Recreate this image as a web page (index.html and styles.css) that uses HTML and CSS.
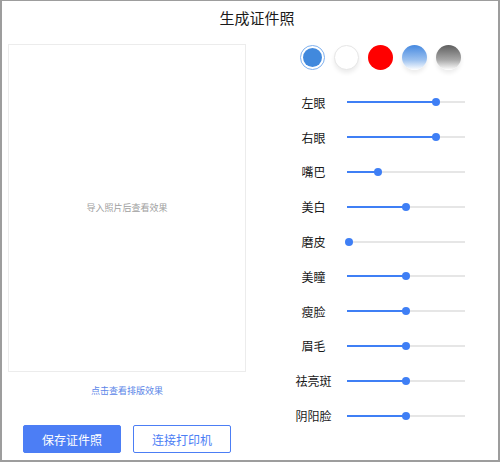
FILE: index.html
```html
<!DOCTYPE html>
<html lang="zh-CN">
<head>
<meta charset="utf-8">
<title>生成证件照</title>
<link rel="stylesheet" href="styles.css">
</head>
<body>
<div class="app">
  <header class="header">生成证件照</header>
  <main class="main">
    <section class="left">
      <div class="photo"><span class="photo-hint">导入照片后查看效果</span></div>
      <a class="layout-link">点击查看排版效果</a>
      <div class="buttons">
        <button class="btn btn-primary">保存证件照</button>
        <button class="btn btn-outline">连接打印机</button>
      </div>
    </section>
    <section class="right">
      <div class="colors">
        <span class="swatch swatch-blue selected"></span>
        <span class="swatch swatch-white"></span>
        <span class="swatch swatch-red"></span>
        <span class="swatch swatch-grad-blue"></span>
        <span class="swatch swatch-grad-gray"></span>
      </div>
      <div class="sliders">
        <div class="row"><span class="label">左眼</span><div class="track"><div class="fill" style="width:75%"></div><span class="thumb" style="left:75%"></span></div></div>
        <div class="row"><span class="label">右眼</span><div class="track"><div class="fill" style="width:75%"></div><span class="thumb" style="left:75%"></span></div></div>
        <div class="row"><span class="label">嘴巴</span><div class="track"><div class="fill" style="width:26%"></div><span class="thumb" style="left:26%"></span></div></div>
        <div class="row"><span class="label">美白</span><div class="track"><div class="fill" style="width:50%"></div><span class="thumb" style="left:50%"></span></div></div>
        <div class="row"><span class="label">磨皮</span><div class="track"><div class="fill" style="width:0%"></div><span class="thumb" style="left:2%"></span></div></div>
        <div class="row"><span class="label">美瞳</span><div class="track"><div class="fill" style="width:50%"></div><span class="thumb" style="left:50%"></span></div></div>
        <div class="row"><span class="label">瘦脸</span><div class="track"><div class="fill" style="width:50%"></div><span class="thumb" style="left:50%"></span></div></div>
        <div class="row"><span class="label">眉毛</span><div class="track"><div class="fill" style="width:50%"></div><span class="thumb" style="left:50%"></span></div></div>
        <div class="row"><span class="label">祛亮斑</span><div class="track"><div class="fill" style="width:50%"></div><span class="thumb" style="left:50%"></span></div></div>
        <div class="row"><span class="label">阴阳脸</span><div class="track"><div class="fill" style="width:50%"></div><span class="thumb" style="left:50%"></span></div></div>
      </div>
    </section>
  </main>
</div>
</body>
</html>
```
FILE: styles.css
```css
* { box-sizing: border-box; }
html, body { margin: 0; padding: 0; background: #fff; }
body {
  font-family: "Noto Sans CJK SC", "Noto Sans", "Liberation Sans", sans-serif;
  color: #222;
}
.app {
  width: 500px;
  height: 462px;
  border: 2px solid #9d9d9d;
  border-top-width: 1px;
  display: flex;
  flex-direction: column;
}
.header {
  height: 33px;
  line-height: 33px;
  text-align: center;
  font-size: 15px;
  padding-left: 14px;
  color: #1a1a1a;
}
.main {
  display: flex;
  padding-top: 10px;
}
.left {
  margin-left: 6px;
  width: 238px;
  display: flex;
  flex-direction: column;
  align-items: stretch;
}
.photo {
  height: 328px;
  border: 1px solid #ececec;
  display: flex;
  align-items: center;
  justify-content: center;
}
.photo-hint {
  font-size: 9px;
  color: #a0a0a0;
  margin-top: -2px;
}
.layout-link {
  display: block;
  text-align: center;
  font-size: 9px;
  line-height: 12px;
  color: #5b86e8;
  margin-top: 13px;
}
.buttons {
  display: flex;
  gap: 12px;
  padding-left: 15px;
  margin-top: 28px;
}
.btn {
  width: 98px;
  height: 28px;
  border-radius: 2px;
  font-family: inherit;
  font-size: 12px;
  padding: 0;
  cursor: pointer;
}
.btn-primary {
  background: #4c7ef5;
  border: 1px solid #4c7ef5;
  color: #fff;
}
.btn-outline {
  background: #fff;
  border: 1px solid #4c7ef5;
  color: #4c7ef5;
}
.right {
  margin-left: 36px;
  width: 190px;
  display: flex;
  flex-direction: column;
}
.colors {
  display: flex;
  gap: 9px;
  padding-left: 18px;
  margin-top: 1px;
}
.swatch {
  width: 25px;
  height: 25px;
  border-radius: 50%;
  display: block;
  box-shadow: 0 3px 4px rgba(0, 0, 0, 0.08);
}
.swatch-blue {
  background: #4189dd;
  background-clip: content-box;
  padding: 2px;
  border: 1px solid #7fb1ef;
  box-shadow: none;
}
.swatch-white {
  background: #fff;
  border: 1px solid #e6e6e6;
}
.swatch-red {
  background: #ff0000;
  box-shadow: none;
}
.swatch-grad-blue {
  background: linear-gradient(to bottom, #4689e0 0%, #9cc1ef 60%, #ffffff 100%);
}
.swatch-grad-gray {
  background: linear-gradient(to bottom, #5e5e5e 0%, #a8a8a8 60%, #ffffff 100%);
}
.sliders {
  margin-top: 15px;
  display: flex;
  flex-direction: column;
}
.row {
  height: 34.8px;
  display: flex;
  align-items: center;
}
.label {
  width: 45px;
  margin-left: 9px;
  text-align: center;
  font-size: 12px;
  color: #1a1a1a;
}
.track {
  position: relative;
  margin-left: 11px;
  width: 118px;
  height: 2px;
  background: #e6e6e6;
}
.fill {
  height: 2px;
  background: #3f7ff5;
}
.thumb {
  position: absolute;
  top: 50%;
  width: 8px;
  height: 8px;
  border-radius: 50%;
  background: #3f7ff5;
  transform: translate(-50%, -50%);
}
```
